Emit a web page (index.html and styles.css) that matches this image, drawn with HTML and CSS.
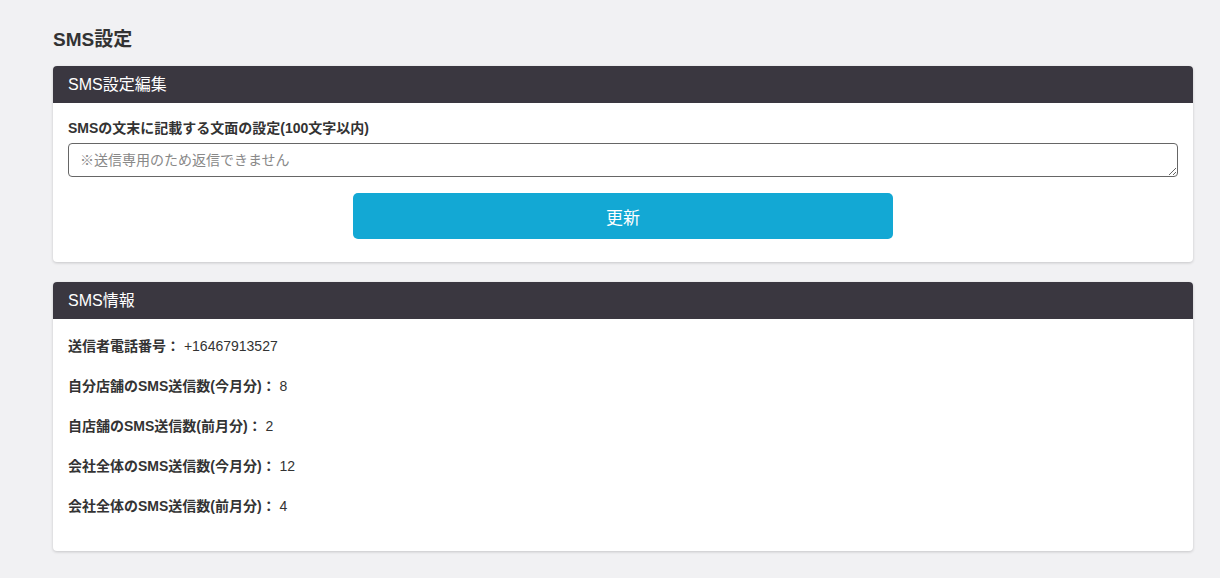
FILE: index.html
```html
<!DOCTYPE html>
<html lang="ja">
<head>
    <meta charset="UTF-8">
    <meta name="viewport" content="width=device-width, initial-scale=1.0">
    <title>SMS設定</title>
    <link rel="stylesheet" href="styles.css">
</head>
<body>
    <div class="container">
        <h1 class="page-title">SMS設定</h1>

        <section class="card">
            <div class="card-header">SMS設定編集</div>
            <form class="card-body" id="smsForm">
                <label for="footer_text" class="field-label">SMSの文末に記載する文面の設定(100文字以内)</label>
                <textarea id="footer_text" name="footer_text" maxlength="100" placeholder="※送信専用のため返信できません"></textarea>
                <div class="actions">
                    <button type="submit" class="btn-primary">更新</button>
                </div>
            </form>
        </section>

        <section class="card">
            <div class="card-header">SMS情報</div>
            <div class="card-body info">
                <p><strong>送信者電話番号：</strong> +16467913527</p>
                <p><strong>自分店舗のSMS送信数(今月分)：</strong> 8</p>
                <p><strong>自店舗のSMS送信数(前月分)：</strong> 2</p>
                <p><strong>会社全体のSMS送信数(今月分)：</strong> 12</p>
                <p><strong>会社全体のSMS送信数(前月分)：</strong> 4</p>
            </div>
        </section>
    </div>
</body>
</html>
```

FILE: styles.css
```css
body {
    font-family: "Liberation Sans", "Noto Sans CJK JP", Arial, sans-serif;
    margin: 0;
    background-color: #f1f1f3;
    color: #333;
}
.container {
    width: 1140px;
    padding: 27px 0 26px 53px;
}
.page-title {
    font-size: 19px;
    font-weight: bold;
    margin: 0 0 13px;
    line-height: 26px;
    color: #333;
}
.card {
    background: #fff;
    border-radius: 4px;
    box-shadow: 0 1px 3px rgba(0, 0, 0, 0.18);
    margin-bottom: 20px;
    overflow: hidden;
}
.card-header {
    background-color: #3a3740;
    color: #fff;
    font-size: 16px;
    line-height: 37px;
    padding: 0 15px;
}
.card-body {
    padding: 15px 15px 23px;
}
.field-label {
    display: block;
    font-size: 14px;
    font-weight: bold;
    line-height: 20px;
    margin-bottom: 5px;
}
textarea {
    display: block;
    width: 100%;
    box-sizing: border-box;
    height: 34px;
    padding: 7px 11px;
    border: 1px solid #666;
    border-radius: 4px;
    font-family: inherit;
    font-size: 14px;
    line-height: 18px;
    resize: vertical;
}
textarea::placeholder {
    color: #888;
}
.actions {
    display: flex;
    justify-content: center;
    margin-top: 16px;
}
.btn-primary {
    width: 540px;
    height: 46px;
    background-color: #13a8d4;
    color: #fff;
    border: none;
    border-radius: 5px;
    font-family: inherit;
    font-size: 17px;
    cursor: pointer;
}
.btn-primary:hover {
    background-color: #0f93ba;
}
.info {
    padding: 17px 15px 15px;
}
.info p {
    margin: 0 0 20px;
    font-size: 14px;
    line-height: 20px;
    color: #333;
}
.info strong {
    font-weight: bold;
}
```
